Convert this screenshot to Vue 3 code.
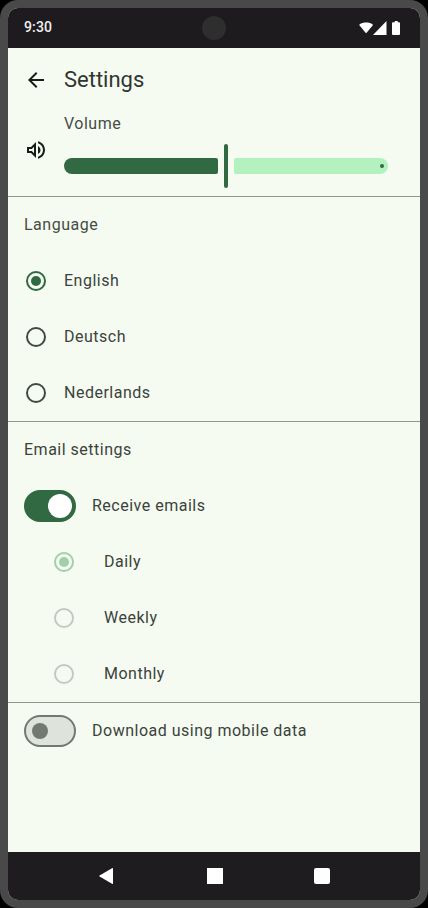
<script setup>
import { ref } from 'vue'

const volume = ref(50)
const language = ref('English')
const languages = ['English', 'Deutsch', 'Nederlands']
const receiveEmails = ref(true)
const frequency = ref('Daily')
const frequencies = ['Daily', 'Weekly', 'Monthly']
const mobileData = ref(false)
</script>

<template>
  <div class="device">
    <div class="screen">
      <header class="status-bar">
        <span class="clock">9:30</span>
        <span class="camera"></span>
        <svg class="status-icons" width="42" height="14" viewBox="0 0 42 14">
          <path d="M.4 4.300Q0 3.800 .5 3.400C4 1 10.200 1 13.700 3.400Q14.200 3.800 13.800 4.300L7.600 11.700Q7.100 12.200 6.600 11.700Z" />
          <path d="M27.500 0V14H14Z" />
          <path d="M35.800 0h2.900v1.300h1.300q1 0 1 1V13q0 1-1 1h-6q-1 0-1-1V2.300q0-1 1-1h1.800Z" />
        </svg>
      </header>

      <main class="content">
        <div class="app-bar">
          <svg class="icon" width="24" height="24" viewBox="0 0 24 24">
            <path d="M20 11H7.830l5.590-5.590L12 4l-8 8 8 8 1.410-1.410L7.830 13H20v-2z" />
          </svg>
          <h1 class="title">Settings</h1>
        </div>

        <section class="volume">
          <svg class="icon" width="24" height="24" viewBox="0 0 24 24">
            <path d="M3 9v6h4l5 5V4L7 9H3zm7-.17v6.340L7.830 13H5v-2h2.830L10 8.830zM16.500 12c0-1.770-1.020-3.290-2.500-4.030v8.050c1.480-.73 2.500-2.250 2.500-4.020zM14 3.230v2.060c2.890.86 5 3.540 5 6.710s-2.110 5.850-5 6.710v2.060c4.010-.91 7-4.490 7-8.770s-2.990-7.860-7-8.770z" />
          </svg>
          <div class="volume-body">
            <span class="label muted">Volume</span>
            <div class="slider">
              <span class="track active" :style="{ flexGrow: volume }"></span>
              <span class="handle"></span>
              <span class="track rest" :style="{ flexGrow: 100 - volume }"></span>
            </div>
          </div>
        </section>

        <section class="group">
          <h2 class="row label muted">Language</h2>
          <div v-for="item in languages" :key="item" class="row" @click="language = item">
            <span class="radio" :class="{ on: item === language }"></span>
            <span class="label">{{ item }}</span>
          </div>
        </section>

        <section class="group">
          <h2 class="row label">Email settings</h2>
          <div class="row" @click="receiveEmails = !receiveEmails">
            <span class="switch" :class="{ on: receiveEmails }"></span>
            <span class="label">Receive emails</span>
          </div>
          <div v-for="item in frequencies" :key="item" class="row nested">
            <span class="radio disabled" :class="{ on: item === frequency }"></span>
            <span class="label">{{ item }}</span>
          </div>
        </section>

        <section class="group">
          <div class="row" @click="mobileData = !mobileData">
            <span class="switch" :class="{ on: mobileData }"></span>
            <span class="label">Download using mobile data</span>
          </div>
        </section>
      </main>

      <nav class="nav-bar">
        <svg width="16" height="16" viewBox="0 0 16 16"><path d="M14 .7V15.300Q14 16.300 13 15.800L.6 8.600Q-.2 8 .6 7.400L13 .2Q14-.3 14 .7Z" /></svg>
        <svg width="16" height="16" viewBox="0 0 16 16"><rect width="16" height="16" /></svg>
        <svg width="16" height="16" viewBox="0 0 16 16"><rect width="16" height="16" rx="2" /></svg>
      </nav>
    </div>
  </div>
</template>

<style>
body {
  margin: 0;
  background: #000;
}
</style>

<style scoped>
.device {
  box-sizing: border-box;
  width: 428px;
  height: 908px;
  padding: 8px;
  border-radius: 18px;
  background: #494949;
  font-family: Roboto, sans-serif;
  color: #414941;
}
.screen {
  display: flex;
  flex-direction: column;
  height: 100%;
  overflow: hidden;
  border-radius: 10px;
  background: #f5fbf1;
}
.status-bar {
  display: grid;
  grid-template-columns: 1fr 24px 1fr;
  align-items: center;
  flex: none;
  height: 40px;
  padding: 0 19px;
  background: #1e1b1f;
}
.clock {
  margin-left: -3px;
  padding-bottom: 2px;
  font-size: 14px;
  font-weight: 500;
  line-height: 20px;
  letter-spacing: 0.14px;
  color: #f0eef0;
}
.camera {
  width: 24px;
  height: 24px;
  border-radius: 50%;
  background: #2e2e2e;
}
.status-icons {
  justify-self: end;
  fill: #fff;
}
.content {
  flex: 1;
}
.app-bar {
  display: flex;
  align-items: center;
  gap: 16px;
  height: 64px;
  padding: 0 16px;
}
.icon {
  flex: none;
  fill: #171d17;
}
.title {
  margin: 0;
  font-size: 22px;
  font-weight: 400;
  line-height: 28px;
  color: #303630;
}
.label {
  font-size: 16px;
  font-weight: 400;
  line-height: 24px;
  letter-spacing: 0.5px;
  color: #3c423c;
}
.label.muted {
  color: #464d46;
}
.volume {
  display: flex;
  align-items: center;
  gap: 16px;
  box-sizing: border-box;
  height: 84px;
  padding: 0 32px 8px 16px;
}
.volume-body {
  display: flex;
  flex: 1;
  flex-direction: column;
  gap: 8px;
}
.slider {
  display: flex;
  align-items: center;
  gap: 6px;
  height: 44px;
}
.track {
  flex-basis: 0;
  height: 16px;
}
.active {
  border-radius: 8px 2px 2px 8px;
  background: #316a42;
}
.rest {
  display: flex;
  align-items: center;
  justify-content: flex-end;
  border-radius: 2px 8px 8px 2px;
  background: #b3f1be;
}
.rest::after {
  content: '';
  width: 4px;
  height: 4px;
  margin-right: 4px;
  border-radius: 50%;
  background: #316a42;
}
.handle {
  width: 4px;
  height: 44px;
  border-radius: 2px;
  background: #316a42;
}
.group {
  border-top: 1px solid #8f968e;
}
.row {
  display: flex;
  align-items: center;
  gap: 16px;
  height: 56px;
  margin: 0;
  padding: 0 16px;
}
.nested {
  gap: 28px;
  padding-left: 44px;
}
.radio {
  display: grid;
  place-items: center;
  box-sizing: border-box;
  width: 20px;
  height: 20px;
  margin: 0 2px;
  border: 2px solid #414941;
  border-radius: 50%;
}
.radio.on {
  border-color: #316a42;
}
.radio.on::after {
  content: '';
  width: 10px;
  height: 10px;
  border-radius: 50%;
  background: #316a42;
}
.radio.disabled {
  border-color: #c2c9c0;
}
.radio.disabled.on {
  border-color: #a3cfab;
}
.radio.disabled.on::after {
  background: #a0d0a9;
}
.switch {
  display: flex;
  align-items: center;
  box-sizing: border-box;
  width: 52px;
  height: 32px;
  padding: 0 6px;
  border: 2px solid #717971;
  border-radius: 16px;
  background: #dee4dc;
}
.switch::after {
  content: '';
  width: 16px;
  height: 16px;
  border-radius: 50%;
  background: #717971;
}
.switch.on {
  justify-content: flex-end;
  padding: 0 2px;
  border-color: #316a42;
  background: #316a42;
}
.switch.on::after {
  width: 24px;
  height: 24px;
  background: #fff;
}
.nav-bar {
  display: flex;
  align-items: center;
  justify-content: center;
  gap: 91.5px;
  flex: none;
  height: 48px;
  padding-left: 1px;
  background: #1e1c1f;
}
.nav-bar svg {
  fill: #fff;
}
</style>
